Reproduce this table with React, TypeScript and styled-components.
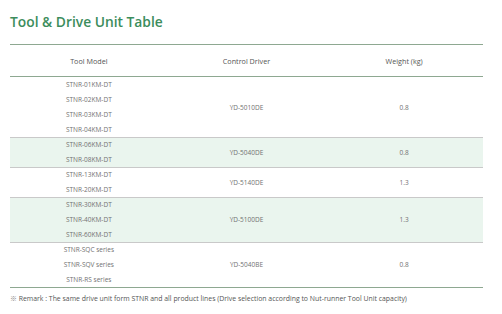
import React from "react";
import styled, { createGlobalStyle } from "styled-components";

interface Group {
  models: string[];
  driver: string;
  weight: string;
  tinted?: boolean;
}

const groups: Group[] = [
  { models: ["STNR-01KM-DT", "STNR-02KM-DT", "STNR-03KM-DT", "STNR-04KM-DT"], driver: "YD-5010DE", weight: "0.8" },
  { models: ["STNR-06KM-DT", "STNR-08KM-DT"], driver: "YD-5040DE", weight: "0.8", tinted: true },
  { models: ["STNR-13KM-DT", "STNR-20KM-DT"], driver: "YD-5140DE", weight: "1.3" },
  { models: ["STNR-30KM-DT", "STNR-40KM-DT", "STNR-60KM-DT"], driver: "YD-5100DE", weight: "1.3", tinted: true },
  { models: ["STNR-SQC series", "STNR-SQV series", "STNR-RS series"], driver: "YD-5040BE", weight: "0.8" },
];

const App: React.FC = () => {
  return (
    <>
      <GlobalStyle />
      <Page>
        <Title>Tool &amp; Drive Unit Table</Title>
        <Table>
          <HeaderRow>
            <HeadCell>Tool Model</HeadCell>
            <HeadCell>Control Driver</HeadCell>
            <HeadCell>Weight (kg)</HeadCell>
          </HeaderRow>
          {groups.map((g, i) => (
            <GroupRow key={g.driver + i} $tinted={g.tinted} $first={i === 0}>
              <ModelList>
                {g.models.map((m) => (
                  <Line key={m}>{m}</Line>
                ))}
              </ModelList>
              <Cell>{g.driver}</Cell>
              <Cell>{g.weight}</Cell>
            </GroupRow>
          ))}
        </Table>
        <Remark>
          <Mark>※</Mark> Remark : The same drive unit form STNR and all product lines (Drive selection according to Nut-runner Tool Unit capacity)
        </Remark>
      </Page>
    </>
  );
};

export default App;

const GlobalStyle = createGlobalStyle`
  html, body {
    margin: 0;
    padding: 0;
    background: #ffffff;
  }
  body {
    font-family: "Open Sans", "Liberation Sans", sans-serif;
  }
`;

const Page = styled.div`
  width: 502px;
  height: 314px;
  box-sizing: border-box;
  padding: 12px 19px 0 10px;
  display: flex;
  flex-direction: column;
`;

const Title = styled.h1`
  margin: 0;
  font-size: 13.8px;
  font-weight: 600;
  line-height: 20px;
  color: #3c8d5c;
`;

const Table = styled.div`
  margin-top: 12px;
  border-top: 1px solid #8ea891;
  border-bottom: 1px solid #8ea891;
  display: flex;
  flex-direction: column;
`;

const Row = styled.div`
  display: grid;
  grid-template-columns: 1fr 1fr 1fr;
`;

const HeaderRow = styled(Row)`
  height: 31px;
  border-bottom: 1px solid #8ea891;
  color: #555;
`;

const GroupRow = styled(Row)<{ $tinted?: boolean; $first?: boolean }>`
  background: ${(p) => (p.$tinted ? "#eaf5ee" : "#ffffff")};
  box-shadow: ${(p) => (p.$first ? "none" : "inset 0 1px 0 #c9c9c9")};
  color: #727272;
`;

const Cell = styled.div`
  display: flex;
  align-items: center;
  justify-content: center;
  font-size: 6.5px;
`;

const HeadCell = styled(Cell)`
  font-size: 7.2px;
`;

const ModelList = styled.div`
  display: flex;
  flex-direction: column;
  align-items: center;
`;

const Line = styled.div`
  height: 15px;
  line-height: 15px;
  font-size: 6.5px;
`;

const Remark = styled.p`
  margin: 6px 0 0;
  font-size: 6.9px;
  line-height: 9px;
  color: #555;
`;

const Mark = styled.span`
  font-family: "Noto Sans CJK KR", "DejaVu Sans", sans-serif;
  color: #888;
`;
